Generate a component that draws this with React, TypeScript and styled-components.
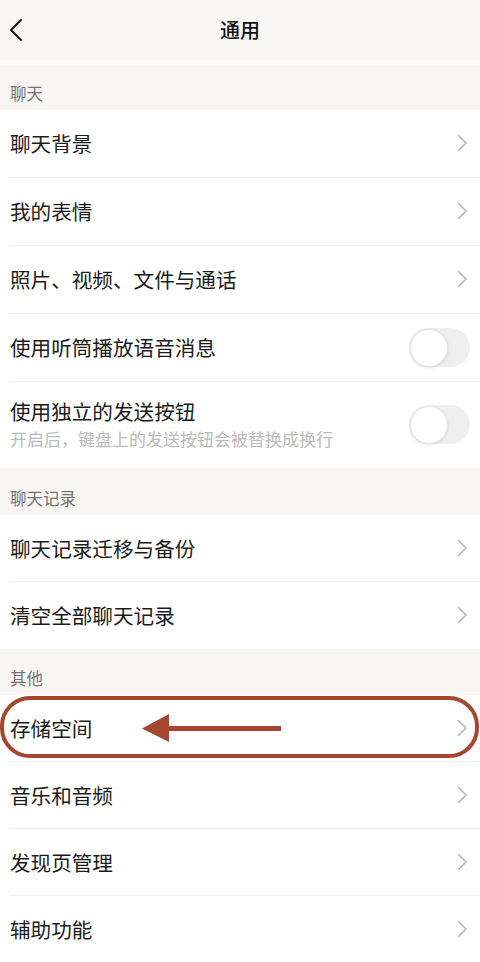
import React from "react";
import styled, { createGlobalStyle } from "styled-components";

const Global = createGlobalStyle`
  html, body { margin: 0; padding: 0; background: #ffffff; }
  body { font-family: "Noto Sans CJK SC", "Noto Sans", sans-serif; -webkit-font-smoothing: antialiased; }
  * { box-sizing: border-box; }
`;

const Page = styled.div`
  width: 480px;
  height: 962px;
  overflow: hidden;
  background: #ffffff;
  display: flex;
  flex-direction: column;
`;

const Header = styled.header`
  height: 65px;
  flex: none;
  background: #f8f7f4;
  border-bottom: 5px solid #fcfcfb;
  display: grid;
  grid-template-columns: 60px 1fr 60px;
  align-items: center;
`;

const Back = styled.div`
  padding-left: 8px;
  display: flex;
  align-items: center;
  height: 60px;
`;

const Title = styled.h1`
  margin: 0;
  text-align: center;
  font-size: 20px;
  font-weight: 500;
  color: #111111;
  line-height: 60px;
`;

const SectionLabel = styled.div<{ $h: number }>`
  height: ${(p) => p.$h}px;
  flex: none;
  background: #f7f6f3;
  display: flex;
  align-items: flex-end;
  padding: 0 10px 5px;
  font-size: 16.5px;
  color: #747474;
  line-height: 24px;
`;

const Row = styled.div<{ $h?: number; $last?: boolean }>`
  position: relative;
  height: ${(p) => p.$h ?? 67}px;
  flex: none;
  background: #ffffff;
  display: flex;
  align-items: center;
  padding: 0 12px 2px 10px;
  &::after {
    content: "";
    display: ${(p) => (p.$last ? "none" : "block")};
    position: absolute;
    left: 10px;
    right: 0;
    bottom: 0;
    height: 1px;
    background: #efefef;
  }
`;

const TextCol = styled.div`
  flex: 1;
  display: flex;
  flex-direction: column;
  gap: 2px;
`;

const Label = styled.div`
  font-size: 20.6px;
  color: #1b1b1b;
  line-height: 28px;
`;

const Sub = styled.div`
  font-size: 17px;
  color: #bbbbbb;
  line-height: 24px;
`;

const Toggle = styled.div`
  width: 61px;
  height: 39px;
  border-radius: 20px;
  background: #efefef;
  margin-right: -2px;
  position: relative;
  flex: none;
  &::before {
    content: "";
    position: absolute;
    left: 1px;
    top: 1.5px;
    width: 36px;
    height: 36px;
    border-radius: 50%;
    background: #ffffff;
    border: 1px solid #e6e6e6;
    box-shadow: 0 1px 3px rgba(0, 0, 0, 0.12);
  }
`;

const Highlight = styled.div`
  position: absolute;
  left: 0;
  right: 1px;
  top: 1px;
  height: 62px;
  border: 4px solid #a5462f;
  border-radius: 30px;
  pointer-events: none;
`;

const ArrowSvg = styled.svg`
  position: absolute;
  left: 0;
  top: 0;
  pointer-events: none;
`;

const Chevron = () => (
  <svg width="11" height="18" viewBox="0 0 11 18" fill="none">
    <path d="M1.5 1.5 L9 9 L1.5 16.5" stroke="#b7b7b7" strokeWidth="1.6" strokeLinecap="round" strokeLinejoin="round" />
  </svg>
);

const BackIcon = () => (
  <svg width="16" height="24" viewBox="0 0 16 24" fill="none">
    <path d="M13 2 L3 12 L13 22" stroke="#111" strokeWidth="1.8" strokeLinecap="round" strokeLinejoin="round" />
  </svg>
);

type Item = { label: string; sub?: string; toggle?: boolean; h?: number; last?: boolean; highlight?: boolean };

const NavRow: React.FC<Item> = ({ label, sub, toggle, h, last, highlight }) => (
  <Row $h={h} $last={last}>
    <TextCol>
      <Label>{label}</Label>
      {sub && <Sub>{sub}</Sub>}
    </TextCol>
    {toggle ? <Toggle /> : <Chevron />}
    {highlight && (
      <>
        <Highlight />
        <ArrowSvg width="300" height="67" viewBox="0 0 300 67">
          <polygon points="142,33.5 169,19 169,47" fill="#a5462f" />
          <rect x="166" y="31" width="115" height="5" fill="#a5462f" />
        </ArrowSvg>
      </>
    )}
  </Row>
);

export default function App() {
  return (
    <Page>
      <Global />
      <Header>
        <Back>
          <BackIcon />
        </Back>
        <Title>通用</Title>
        <div />
      </Header>
      <SectionLabel $h={45}>聊天</SectionLabel>
      <NavRow label="聊天背景" h={68} />
      <NavRow label="我的表情" h={68} />
      <NavRow label="照片、视频、文件与通话" h={68} />
      <NavRow label="使用听筒播放语音消息" toggle h={68} />
      <NavRow label="使用独立的发送按钮" sub="开启后，键盘上的发送按钮会被替换成换行" toggle h={86} last />
      <SectionLabel $h={47}>聊天记录</SectionLabel>
      <NavRow label="聊天记录迁移与备份" />
      <NavRow label="清空全部聊天记录" last />
      <SectionLabel $h={46}>其他</SectionLabel>
      <NavRow label="存储空间" highlight />
      <NavRow label="音乐和音频" />
      <NavRow label="发现页管理" />
      <NavRow label="辅助功能" last />
    </Page>
  );
}
